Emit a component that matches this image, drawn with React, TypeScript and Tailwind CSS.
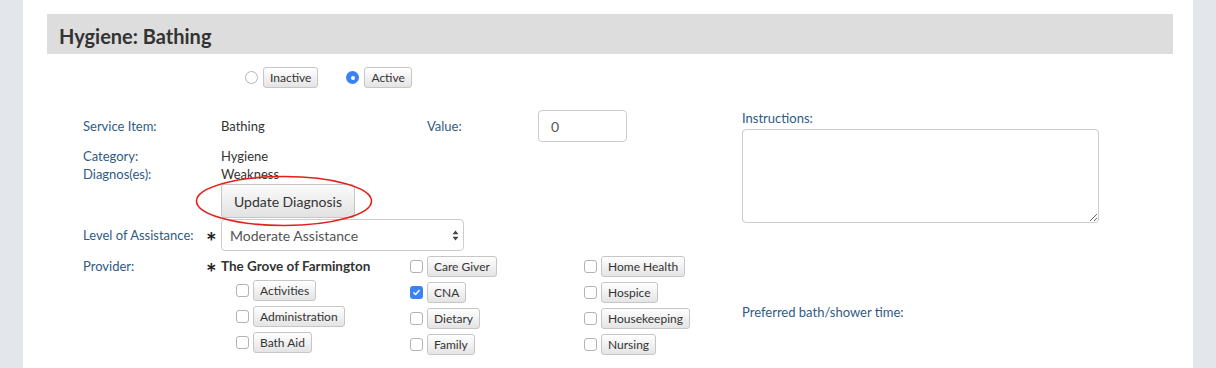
import React from "react";

const label = "text-[13px] text-[#2f5b86]";

function Box({ checked }: { checked?: boolean }) {
  return checked ? (
    <span className="flex h-[13px] w-[13px] shrink-0 items-center justify-center rounded-[3px] bg-[#3b82f6]">
      <svg width="9" height="9" viewBox="0 0 10 10" fill="none">
        <path d="M2 5.3l2 2L8 2.8" stroke="white" strokeWidth="1.6" strokeLinecap="round" strokeLinejoin="round" />
      </svg>
    </span>
  ) : (
    <span className="h-[13px] w-[13px] shrink-0 rounded-[3px] border border-[#b3b3b3] bg-white" />
  );
}

function Btn({ children, className = "" }: { children: React.ReactNode; className?: string }) {
  return (
    <span
      className={`inline-flex h-[21px] items-center rounded-[3px] border border-[#c6c6c6] bg-gradient-to-b from-white to-[#e4e4e4] px-[6px] text-[12px] text-[#333] ${className}`}
    >
      {children}
    </span>
  );
}

function Check({ name, checked }: { name: string; checked?: boolean }) {
  return (
    <div className="flex h-[21px] items-center gap-[4px]">
      <Box checked={checked} />
      <Btn>{name}</Btn>
    </div>
  );
}

function Star() {
  return (
    <span className="flex h-full w-[16px] items-center pl-[1px]">
      <span className="translate-y-[6px] text-[25px] font-bold leading-none text-[#222]">*</span>
    </span>
  );
}

export default function App() {
  return (
    <div className="flex min-h-[368px] bg-white font-['Lato',sans-serif]">
      <div className="w-[23px] bg-[#e3e7eb]" />
      <div className="flex-1 pl-[24px] pr-[20px] pt-[14px]">
        <div className="flex h-[40px] items-center bg-[#dddddd] px-[12px] pt-[3px] text-[20px] font-bold text-[#333]">
          Hygiene: Bathing
        </div>

        {/* status */}
        <div className="mt-[13px] flex h-[21px] items-center pl-[198px]">
          <span className="h-[13px] w-[13px] rounded-full border border-[#b3b3b3] bg-white" />
          <Btn className="ml-[5px]">Inactive</Btn>
          <span className="ml-[28px] flex h-[13px] w-[13px] items-center justify-center rounded-full bg-[#3b82f6]">
            <span className="h-[4px] w-[4px] rounded-full bg-white" />
          </span>
          <Btn className="ml-[5px]">Active</Btn>
        </div>

        <div className="mt-[22px] flex pl-[36px]">
          {/* left form */}
          <div className="w-[659px]">
            <div className="flex h-[32px] items-center pt-[2px]">
              <span className={`${label} w-[138px]`}>Service Item:</span>
              <span className="w-[206px] text-[13px] text-[#333]">Bathing</span>
              <span className={`${label} w-[111px]`}>Value:</span>
              <input
                readOnly
                value="0"
                className="-mt-[2px] h-[32px] w-[89px] rounded-[4px] border border-[#cccccc] px-[12px] text-[14px] text-[#555] outline-none"
              />
            </div>
            <div className="mt-[5px] flex h-[18px] items-center pt-[1px]">
              <span className={`${label} w-[138px]`}>Category:</span>
              <span className="text-[13px] text-[#333]">Hygiene</span>
            </div>
            <div className="flex h-[18px] items-center pt-[1px]">
              <span className={`${label} w-[138px]`}>Diagnos(es):</span>
              <span className="text-[13px] text-[#333]">Weakness</span>
            </div>
            <div className="relative ml-[138px] mt-[1px] w-[134px]">
              <button className="flex h-[34px] w-[134px] items-center justify-center rounded-[3px] border border-[#c6c6c6] bg-gradient-to-b from-[#fbfbfb] to-[#e2e2e2] text-[14px] text-[#333]">
                Update Diagnosis
              </button>
              <svg className="pointer-events-none absolute left-[-26px] top-[-9px]" width="178" height="52" viewBox="0 0 178 52">
                <ellipse cx="89" cy="26" rx="87.5" ry="24.5" fill="none" stroke="#e3201b" strokeWidth="1.6" />
              </svg>
            </div>
            <div className="mt-[1px] flex h-[32px] items-center">
              <span className={`${label} w-[122px] pt-[2px]`}>Level of Assistance:</span>
              <Star />
              <div className="flex h-[32px] w-[243px] items-center justify-between rounded-[4px] border border-[#cccccc] bg-white pl-[8px] pr-[4px] text-[14px] text-[#555]">
                Moderate Assistance
                <svg width="7" height="11" viewBox="0 0 7 11">
                  <path d="M3.5 0.5L6.5 4.2H0.5z M3.5 10.5L6.5 6.8H0.5z" fill="#444" />
                </svg>
              </div>
            </div>

            {/* providers */}
            <div className="mt-[5px] flex">
              <span className={`${label} flex h-[21px] w-[122px] items-center`}>Provider:</span>
              <span className="h-[21px]">
                <Star />
              </span>
              <div className="w-[189px]">
                <div className="flex h-[21px] items-center text-[13.5px] font-bold text-[#333]">The Grove of Farmington</div>
                <div className="mt-[3px] flex flex-col gap-[5px] pl-[15px]">
                  <Check name="Activities" />
                  <Check name="Administration" />
                  <Check name="Bath Aid" />
                </div>
              </div>
              <div className="flex w-[174px] flex-col gap-[5px]">
                <Check name="Care Giver" />
                <Check name="CNA" checked />
                <Check name="Dietary" />
                <Check name="Family" />
              </div>
              <div className="flex flex-col gap-[5px]">
                <Check name="Home Health" />
                <Check name="Hospice" />
                <Check name="Housekeeping" />
                <Check name="Nursing" />
              </div>
            </div>
          </div>

          {/* right column */}
          <div className="w-[357px]">
            <div className={`${label} h-[16px] leading-[16px]`}>Instructions:</div>
            <textarea className="mt-[3px] block h-[94px] w-[357px] rounded-[4px] border border-[#cccccc] outline-none" />
            <div className={`${label} mt-[81px] h-[16px] leading-[16px]`}>Preferred bath/shower time:</div>
          </div>
        </div>
      </div>
      <div className="w-[23px] bg-[#e3e7eb]" />
    </div>
  );
}
